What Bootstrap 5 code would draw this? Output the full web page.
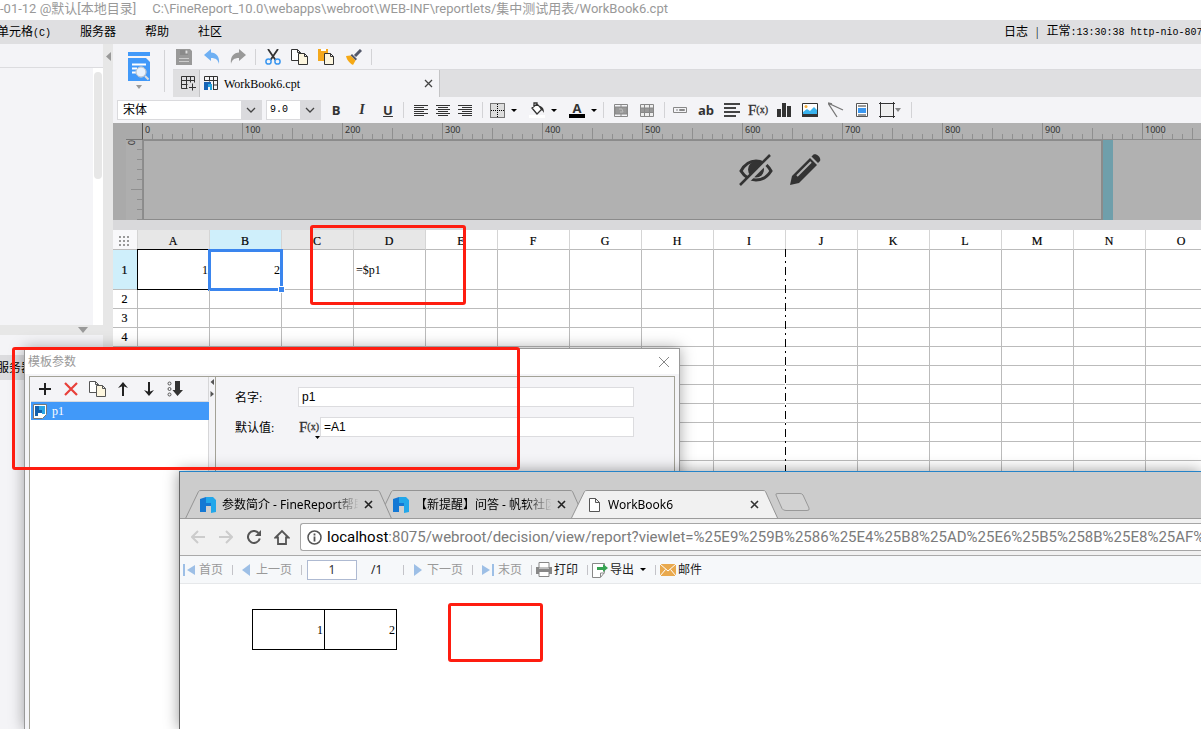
<!DOCTYPE html>
<html lang="zh-CN">
<head>
<meta charset="utf-8">
<meta name="viewport" content="width=device-width, initial-scale=1">
<title>WorkBook6.cpt</title>
<link href="https://cdn.jsdelivr.net/npm/bootstrap@5.3.0/dist/css/bootstrap.min.css" rel="stylesheet">
<style>
:root{--panel:#f4f4f7;--bar:#dfdfe1;--ink:#333;--red:#fe1d10;--ui:"Noto Sans","Noto Sans CJK SC",sans-serif;--path:Roboto,"Noto Sans CJK SC",sans-serif;--song:"Liberation Serif","Noto Sans CJK SC",serif;--mono:"Liberation Mono","Noto Sans CJK SC",monospace}
body{font:12px/16px var(--song);color:#000;background:#fff}
button,input,select{font:inherit;color:inherit}
svg{display:block;flex:none}
.desk{height:100vh}
.title-row{height:20px;font:13px/18px var(--path);color:#999;gap:16px}
.menu-row{height:24px;padding-top:1px;background:var(--bar)}
.menu-row a{color:#000;text-decoration:none}
.menu-links{gap:29px;margin-left:-3px}
.menu-links small{font:10px/16px var(--mono)}
.status-text{width:197px;gap:8px}
.status-text .clock{font:10px/16px var(--mono)}
.status-text .clock b{font-weight:400;font-size:12px}
.side{width:103px;background:var(--panel)}
.side-head{height:24px;border-bottom:1px solid #dcdcdf}
.side-tree{height:257px}
.side-scroll{width:10px;background:#fff;padding:4px 1px}
.side-scroll i{display:block;height:107px;border-radius:4px;background:#e7e7e7}
.side-split{height:10px;background:#e7e7e7;padding-right:15px}
.side-tab{height:25px;margin-top:20px;background:#dcdcdf;border:0;line-height:24px;color:#000;text-indent:-3px}
.gutter{width:10px;background:#e7e7e7;padding-top:8px}
.tbtn{padding:0;border:0;background:none;display:inline-flex;align-items:center;justify-content:center;flex:none;height:24px;color:var(--ink)}
.w22{width:22px}.w26{width:26px}.w27{width:27px}.w30{width:30px}.w40{width:40px;gap:6px}
.vsep{width:1px;height:16px;background:#d3d3d6;flex:none}
.preview-box{width:60px;background:var(--panel);padding-left:9px}
.preview-box .vsep{height:42px}
.preview-box button{width:34px;height:50px;gap:4px;flex-direction:column}
.quick-row{height:25px;background:var(--panel)}
.file-row{height:28px;background:var(--bar);border-top:1px solid #dadadd}
.file-row .sheet{width:27px;height:27px;padding-left:4px;border-right:1px solid #c4c4c6}
.file-tab{width:240px;background:var(--panel);border-right:1px solid #c4c4c6;gap:5px;padding:0 6px 0 4px}
.format-row{height:26px;background:var(--panel);padding-left:4px}
.pick{height:20px;border:1px solid #dadadd;border-radius:0;padding:0 22px 0 5px;appearance:none;line-height:18px;background:#fff url("data:image/svg+xml,%3Csvg xmlns='http://www.w3.org/2000/svg' width='20' height='18'%3E%3Cpath fill='%23dadadd' d='M0 0h20v18H0z'/%3E%3Cpath fill='none' stroke='%23444' stroke-width='1.3' d='M6 7l4 4 4-4'/%3E%3C/svg%3E") right center no-repeat}
.pick-face{width:145px}.pick-size{width:55px;font:10px/18px var(--mono);padding-left:3px}
.glyph{font:bold 13px/16px "Open Sans",sans-serif}
.glyph-serif{font:italic bold 14px/16px var(--song)}
.glyph-fx{font:15px/16px "Liberation Serif",serif;-webkit-text-stroke:.3px #333}
.glyph-fx small{font-size:10px}
.biu{margin:0 2px}
.aligns{margin:0 6px}
.design{display:grid;grid-template-columns:13px 17px 1fr;grid-template-rows:17px 80px;background:#b1b1b1;overflow:hidden;font:9px/13px "Noto Sans",sans-serif;color:#333}
.d-corner{background:#aaa;grid-row:1/3}
.d-corner2{background:#aaa;border-bottom:1px solid #777}
.rule-x{overflow:hidden;margin-left:-1px;border-bottom:1px solid #8d8d8d;border-left:1px solid #555;background:
 repeating-linear-gradient(90deg,transparent 0 99px,#8a8a8a 99px 100px) 0 0/100% 16px no-repeat,
 repeating-linear-gradient(90deg,transparent 0 49px,#8f8f8f 49px 50px) 0 5px/100% 11px no-repeat,
 repeating-linear-gradient(90deg,transparent 0 9px,#8f8f8f 9px 10px) 0 11px/100% 5px no-repeat}
.rule-x span{width:100px;flex:none;padding-left:2px}
.rule-y{border-right:1px solid #8d8d8d;background:
 repeating-linear-gradient(180deg,transparent 0 49px,#8f8f8f 49px 50px) right 0/11px 100% no-repeat,
 repeating-linear-gradient(180deg,transparent 0 9px,#8f8f8f 9px 10px) right 0/5px 100% no-repeat,#aeaeae}
.rule-y span{writing-mode:vertical-rl;line-height:10px;display:block;width:10px}
.paper{width:960px;border:1px solid #8b8b8b;border-width:1px 2px 1px 1px;padding:13px 0 0 595px;gap:16px}
.paper-edge{width:10px;background:#6f9fab}
.grid-gap{height:10px;background:#d9d9db}
.sheet-area{overflow:hidden;flex:1 1 0;min-height:0;background:#fff}
.cells{table-layout:fixed;width:1105px;border-collapse:separate;border-spacing:0;line-height:14px}
.cells th,.cells td{border:solid #bbb;border-width:0 1px 1px 0;padding:0 1px 0 2px;font-weight:400;height:19px;position:relative;color:#000}
.cells th{text-align:center;padding:0 1px 0 0;-webkit-text-stroke:.2px #000}
.cells thead th{height:20px;padding-top:2px;border-right-color:#d5d5d5}
.cells .r1>*{height:40px}
.cells .dim{background:#e7e7e7}.cells .hot{background:#cfeffb}
.cells td.boxed::before{content:"";position:absolute;inset:-1px;border:1px solid #000}
.cells td.picked::after{content:"";position:absolute;inset:-1px -2px -2px -2px;border:3px solid #3a85ee}
.cells .handle{position:absolute;right:-3px;bottom:-3px;width:5px;height:5px;background:#3a85ee;outline:1px solid #fff;z-index:2}
.page-line{position:absolute;left:672px;top:19px;bottom:0;width:1px;z-index:2;background:repeating-linear-gradient(180deg,#000 0 8px,#fff 8px 12px,#000 12px 14px,#fff 14px 18px)}
.mark-box{position:absolute;border:3px solid var(--red);border-radius:3px;pointer-events:none;z-index:30}
.mark-cells{left:310px;top:225px;width:156px;height:80px}
.mark-dialog{left:12px;top:347px;width:508px;height:123px}
.mark-result{left:268px;top:131px;width:95px;height:59px}
.dialog-win{position:absolute;left:24px;top:348px;bottom:0;width:656px;background:#f4f4f7;border:1px solid #999;border-bottom:0;box-shadow:0 0 14px rgba(0,0,0,.35);z-index:10}
.dialog-head{height:25px;background:#fff;padding:0 9px 0 3px;font:12px/16px var(--ui);color:#999;margin-bottom:2px}
.dialog-body{margin:0 4px;border:1px solid #a3a297;border-bottom:0}
.param-side{width:179px;border-right:1px solid #d6d6d8;background:#fff}
.param-tools{height:24px;background:var(--panel);padding-left:2px}
.param-item{height:19px;margin:0 0 0 1px;background:#4199f9;color:#fff;border:0;padding:0 2px;gap:5px;border-top:1px solid #d8dadf}
.param-split{width:7px;background:var(--panel);border-right:1px solid #a3a297}
.param-form{background:var(--panel);padding:10px 40px 0 19px}
.param-form .line{height:20px;margin-bottom:10px}
.param-form label{width:63px;padding-top:1px}
.param-form input{height:20px;border:1px solid #dcdcdf;border-radius:0;padding:0 3px;font:12px/18px "Liberation Sans",sans-serif;min-width:0;flex:1}
.browser-win{position:absolute;left:179px;top:471px;right:0;bottom:0;background:#fff;border-left:1px solid #666;border-top:1px solid #2583c8;box-shadow:0 0 14px rgba(0,0,0,.4);z-index:20;font-family:var(--ui)}
.tab-strip{height:47px;background:#ccc;padding:18px 0 0 5px;border-bottom:1px solid #9b9b9b}
.btab{width:207px;height:29px;position:relative;padding:0 19px 0 15px;gap:6px;flex:none;margin-right:-14px;color:#000;text-decoration:none;margin-bottom:-1px}
.btab .shape{position:absolute;left:0;top:0;z-index:-1}
.btab .txt{flex:1;overflow:hidden;white-space:nowrap;-webkit-mask:linear-gradient(90deg,#000 110px,transparent 137px);mask:linear-gradient(90deg,#000 110px,transparent 137px)}
.btab:nth-child(1){z-index:2}.btab:nth-child(2){z-index:1}.btab:nth-child(3){z-index:3}
.nav-row{height:37px;background:#f1f1f1;border-bottom:1px solid #aaa;padding-left:4px}
.nav-row .tbtn{width:28px}
.url{flex:1;height:28px;border:1px solid #a6a6a6;border-right:0;border-radius:3px 0 0 3px;background:#fff;overflow:hidden;white-space:nowrap;font:15px/26px var(--path);color:#7b7b7b;margin-left:4px;padding-left:6px;gap:5px}
.url b{font-weight:400;color:#000}
.report-row{height:28px;background:#f6f8fa;border-bottom:1px solid #e6e8ea;padding-left:3px;color:#222}
.rbtn{padding:0;border:0;background:none;display:inline-flex;align-items:center;gap:4px;flex:none;line-height:18px}
.rbtn.tight{gap:2px}
.rbtn:disabled{color:#999}
.rsep{width:1px;height:10px;background:#c3c3c8;flex:none;margin:0 9px}
.rsep.near{margin-right:4px}
.page-no{width:50px;height:20px;border:1px solid #aebad2;border-radius:0;padding:0;margin-left:-4px;text-align:center;color:#333}
.page-sum{width:32px;margin-left:14px}
.result{width:145px;margin:25px 0 0 72px;border-collapse:collapse;font:12px/14px var(--song);table-layout:fixed}
.result td{border:1px solid #000;height:40px;padding:0 1px;text-align:right}
</style>
</head>
<body>
<div class="desk d-flex flex-column overflow-hidden position-relative">
  <header>
    <div class="title-row d-flex text-nowrap"><span>-01-12 @默认[本地目录]</span><span>C:\FineReport_10.0\webapps\webroot\WEB-INF\reportlets/集中测试用表/WorkBook6.cpt</span></div>
    <nav class="menu-row d-flex align-items-center text-nowrap">
      <div class="menu-links d-flex flex-grow-1"><a href="#">单元格<small>(C)</small></a><a href="#">服务器</a><a href="#">帮助</a><a href="#">社区</a></div>
      <div class="status-text d-flex overflow-hidden"><a href="#">日志</a><span>|</span><span class="clock"><b>正常</b>:13:30:38 http-nio-8075</span></div>
    </nav>
  </header>

  <div class="d-flex flex-grow-1" style="min-height:0">
    <aside class="side flex-shrink-0 d-flex flex-column">
      <div class="side-head"></div>
      <div class="side-tree d-flex justify-content-end"><div class="side-scroll"><i></i></div></div>
      <div class="side-split d-flex justify-content-end align-items-center"><svg width="10" height="6"><path d="M0 0h10L5 6z" fill="#999"/></svg></div>
      <button class="side-tab text-start p-0 text-nowrap">服务器</button>
    </aside>
    <div class="gutter flex-shrink-0"><svg width="10" height="9"><path d="M8 0v9L3 4.500z" fill="#999"/></svg></div>

    <main class="d-flex flex-column flex-grow-1" style="min-width:0">
      <div class="d-flex">
        <div class="preview-box d-flex align-items-center flex-shrink-0">
          <button class="tbtn" aria-label="预览"><svg width="22" height="29"><path d="M0 0h22v4H0zM0 6h18l4 4v19H0z" fill="#4199f9"/><path d="M4 12.500h14M4 16.500h5M4 20.500h5" stroke="#fff" stroke-width="2"/><circle cx="13" cy="20" r="5" fill="#e8f2fd" stroke="#fff"/><circle cx="13" cy="20" r="5" fill="none" stroke="#7d8fa3" stroke-width=".6"/><path d="M17 24l3.500 3.500" stroke="#ddd" stroke-width="2"/></svg><svg width="6" height="4"><path d="M0 0h6L3 4z" fill="#999"/></svg></button>
          <span class="vsep ms-2"></span>
        </div>
        <div class="flex-grow-1" style="min-width:0">
          <div class="quick-row d-flex align-items-center">
            <button class="tbtn w22" aria-label="保存"><svg width="16" height="16"><path d="M0 0h14l2 2v14H0z" fill="#999"/><path d="M4 1h8v5H4z" fill="#8a8a8a"/><path d="M9.500 1.500h2v3h-2z" fill="#ddd"/><path d="M3 9.500h10M3 12.500h10" stroke="#ccc"/></svg></button>
            <button class="tbtn w30 ps-1" aria-label="撤销"><svg width="16" height="16"><path d="M0 6l7-6v3.500c5 0 9 4 8 11.500-1-4-3-6-8-6V12z" fill="#6fb0f3"/></svg></button>
            <button class="tbtn w26" aria-label="重做"><svg width="16" height="16"><path d="M16 6L9 0v3.500C4 3.500 0 7.500 1 15c1-4 3-6 8-6V12z" fill="#999"/></svg></button>
            <span class="vsep mx-1"></span>
            <button class="tbtn w26" aria-label="剪切"><svg width="16" height="16" fill="none"><path d="M3 0l7.500 11M13 0L5.500 11" stroke="#333" stroke-width="1.800"/><circle cx="3.500" cy="12.500" r="2.600" stroke="#3b97f0" stroke-width="1.500"/><circle cx="12.500" cy="12.500" r="2.600" stroke="#3b97f0" stroke-width="1.500"/></svg></button>
            <button class="tbtn w27" aria-label="复制"><svg width="17" height="16" fill="#fff" stroke="#333"><path d="M.5.500h6l3 3v8h-9zM6.500.500v3h3"/><path d="M7.500 4.500h6l3 3v8h-9zM13.500 4.500v3h3" fill="#fdf6df"/></svg></button>
            <button class="tbtn w27" aria-label="粘贴"><svg width="17" height="16"><path d="M0 0h10v12H0z" fill="#f4a81c"/><path d="M3 0h5v2H3z" fill="#fff"/><path d="M6.500 4.500h6l3 3v8h-9zM12.500 4.500v3h3" fill="#fdf6df" stroke="#333"/></svg></button>
            <button class="tbtn w27" aria-label="格式刷"><svg width="16" height="16"><path d="M15 1L9 7" stroke="#54596a" stroke-width="3"/><path d="M6 5l5 5-1.500 1.500-5-5z" fill="#54596a"/><path d="M0 7l4.500-.5 5 5L7 16C5 15 1 12 0 7z" fill="#f6a915"/></svg></button>
            <span class="vsep ms-1"></span>
          </div>
          <div class="file-row d-flex">
            <button class="tbtn sheet" aria-label="新建"><svg width="15" height="15" fill="none" stroke="#333"><path d="M.5.500h13M.5 4.500h13M.5 8.500h6M.5 12.500h6M.5.500v12M5.500.500v12M9.500.500v6M13.500.500v6M11.500 7.500v7M8 11.500h7"/></svg></button>
            <div class="file-tab d-flex align-items-center"><svg width="15" height="15" fill="none" stroke="#333"><path d="M.5 5V.5h13v13H9M.5 4.500h13M5.500.500v5M9.500.500v13M9.500 9h4"/><path d="M0 6h7v2H4v6H0z" fill="#1763b5" stroke="none"/><path d="M4 8h4v6H6v-3H4z" fill="#28a5e0" stroke="none"/></svg><span class="flex-grow-1">WorkBook6.cpt</span><button class="tbtn" aria-label="关闭"><svg width="9" height="9"><path d="M1 1l7 7M8 1L1 8" stroke="#444" stroke-width="1.300"/></svg></button></div>
          </div>
        </div>
      </div>

      <div class="format-row d-flex align-items-center">
        <select class="pick pick-face" aria-label="字体"><option>宋体</option></select>
        <select class="pick pick-size ms-1" aria-label="字号"><option>9.0</option></select>
        <div class="biu d-flex"><button class="tbtn w26 glyph">B</button><button class="tbtn w26 glyph-serif">I</button><button class="tbtn w26 glyph text-decoration-underline">U</button></div>
        <span class="vsep"></span>
        <div class="aligns d-flex">
        <button class="tbtn w22" aria-label="左对齐"><svg width="14" height="12" stroke="#333"><path d="M0 1.500h14M0 3.500h10M0 5.500h14M0 7.500h10M0 9.500h14M0 11.500h10"/></svg></button>
        <button class="tbtn w22" aria-label="居中"><svg width="14" height="12" stroke="#333"><path d="M0 1.500h14M2 3.500h10M0 5.500h14M2 7.500h10M0 9.500h14M2 11.500h10"/></svg></button>
        <button class="tbtn w22" aria-label="右对齐"><svg width="14" height="12" stroke="#333"><path d="M0 1.500h14M4 3.500h10M0 5.500h14M4 7.500h10M0 9.500h14M4 11.500h10"/></svg></button>
        </div>
        <span class="vsep"></span>
        <button class="tbtn w40" aria-label="边框"><svg width="15" height="15"><path d="M.5.500h14v14H.5zM7.500 1v13M1 7.500h13" fill="#ddd" stroke="#000" stroke-dasharray="1 1"/></svg><svg width="6" height="3"><path d="M0 0h6L3 3z"/></svg></button>
        <button class="tbtn w40" aria-label="填充"><svg width="16" height="16"><path d="M0 13h16v3H0z" fill="#fff"/><path d="M3 6l5-4 5 5-5 5zM5 5V1h3v3" fill="#fff" stroke="#333" stroke-width="1.300"/><path d="M10 4c3 0 5 2 5 7-1-2-2-3-3-3z" fill="#333"/></svg><svg width="6" height="3"><path d="M0 0h6L3 3z"/></svg></button>
        <button class="tbtn w40" aria-label="字体颜色"><span style="border-bottom:4px solid #000;line-height:12px;width:16px" class="glyph">A</span><svg width="6" height="3"><path d="M0 0h6L3 3z"/></svg></button>
        <span class="vsep"></span>
        <button class="tbtn w26 ms-1" aria-label="合并"><svg width="14" height="13" fill="none" stroke="#888"><path d="M.5.500h13v12H.5zM7 .5v12" /><path d="M1 3h12v7H1z" fill="#999"/><path d="M5 5h3l1 3H6" stroke="#bbb"/></svg></button>
        <button class="tbtn w26" aria-label="取消合并"><svg width="14" height="13"><path d="M.5.500h13v12H.5z" fill="#eee" stroke="#888"/><path d="M1 4h12v5H1z" fill="#999"/><path d="M.5 4h13M.5 8.500h13M4.500 0v13M9.500 0v13" stroke="#888"/></svg></button>
        <span class="vsep mx-1"></span>
        <button class="tbtn w22" aria-label="控件"><svg width="14" height="6" fill="none" stroke="#888"><path d="M.5.500h13v5H.5zM3 3h2M6.500 2.500h5v1h-5z"/></svg></button>
        <button class="tbtn w30 glyph">ab</button>
        <button class="tbtn w22" aria-label="段落"><svg width="16" height="14" stroke="#444" stroke-width="2"><path d="M0 1h16M0 5h12M0 9h16M0 13h12"/></svg></button>
        <button class="tbtn w30 glyph-fx">F<small>(x)</small></button>
        <button class="tbtn w22" aria-label="图表"><svg width="14" height="14" fill="#333"><path d="M0 6h4v8H0zM5 0h4v14H5zM10 3h4v11h-4z"/></svg></button>
        <button class="tbtn w30" aria-label="图片"><svg width="16" height="14"><path d="M.5.500h15v13H.5z" fill="#fff" stroke="#333"/><path d="M1 11V9l4-3 3 2 4-4 3 3v4z" fill="#39b3ee"/><circle cx="4" cy="3.500" r="1.500" fill="#f5b041"/><path d="M0 11h16v3H0z" fill="#333"/></svg></button>
        <button class="tbtn w22" aria-label="斜线"><svg width="16" height="16"><path d="M0 1l15 7M0 1l9 14M0 1l4 1" stroke="#777" stroke-width="1.300" fill="none"/></svg></button>
        <button class="tbtn w30" aria-label="子报表"><svg width="12" height="14"><path d="M.5.500h11v13H.5z" fill="#fff" stroke="#555"/><path d="M2 3h8M2 12h8" stroke="#333"/><path d="M2 5h8v5H2z" fill="#3b97f0"/></svg></button>
        <button class="tbtn w26" aria-label="悬浮元素"><svg width="16" height="16"><path d="M2.500 2.500h11v11h-11z" fill="#eee"/><path d="M1.500 0v16M14.500 0v16M0 1.500h16M0 14.500h16" stroke="#333"/></svg><svg width="6" height="4"><path d="M0 0h6L3 4z" fill="#888"/></svg></button>
        <span class="vsep ms-2"></span>
      </div>

      <div class="design flex-shrink-0">
        <div class="d-corner"></div><div class="d-corner2"></div>
        <div class="rule-x d-flex" id="ruleX"></div>
        <div class="rule-y"><span>0</span></div>
        <div class="d-flex">
          <div class="paper d-flex flex-shrink-0">
            <svg width="34" height="32"><path d="M2 17c5-9 11-10 15-10s10 1 15 10c-5 8-11 9-15 9S7 25 2 17z" fill="none" stroke="#333" stroke-width="3"/><circle cx="17" cy="15.500" r="8" fill="#333"/><path d="M3 32L33 2" stroke="#b1b1b1" stroke-width="5"/><path d="M1 31L31 1" stroke="#333" stroke-width="2.500"/></svg>
            <svg width="32" height="32"><path d="M1 31l2-9L21 4l7 7-18 18z" fill="#333"/><path d="M8 22L22 8" stroke="#b1b1b1" stroke-width="2"/><path d="M22.500 2.500l2-2c3-1.500 8 3 6.500 6.500l-2 2z" fill="#333"/></svg>
          </div>
          <div class="paper-edge flex-shrink-0"></div>
        </div>
      </div>
      <div class="grid-gap flex-shrink-0"></div>
      <div class="sheet-area position-relative">
        <table class="cells"><colgroup><col style="width:25px"></colgroup>
          <thead><tr id="cols"><th style="background:#f8f8fa"><svg width="11" height="10" class="mx-auto" fill="#999"><path d="M0 0h2v2H0zM4 0h2v2H4zM8 0h2v2H8zM0 4h2v2H0zM4 4h2v2H4zM8 4h2v2H8zM0 8h2v2H0zM4 8h2v2H4zM8 8h2v2H8z"/></svg></th></tr></thead>
          <tbody id="rows"></tbody>
        </table>
        <div class="page-line"></div>
      </div>
    </main>
  </div>

  <div class="mark-box mark-cells"></div>
  <div class="mark-box mark-dialog"></div>

  <section class="dialog-win d-flex flex-column">
    <div class="dialog-head d-flex align-items-center justify-content-between"><span>模板参数</span><button class="tbtn" aria-label="关闭"><svg width="12" height="12"><path d="M1 1l10 10M11 1L1 11" stroke="#888"/></svg></button></div>
    <div class="dialog-body d-flex flex-grow-1">
      <div class="param-side flex-shrink-0">
        <div class="param-tools d-flex">
          <button class="tbtn w26" aria-label="添加"><svg width="12" height="12"><path d="M6 0v12M0 6h12" stroke="#222" stroke-width="2"/></svg></button>
          <button class="tbtn w26" aria-label="删除"><svg width="14" height="14"><path d="M1 1l12 12M13 1L1 13" stroke="#e8403a" stroke-width="2.200"/></svg></button>
          <button class="tbtn w26" aria-label="复制"><svg width="17" height="16" fill="#fff" stroke="#555"><path d="M.5.500h6l3 3v8h-9zM6.500.500v3h3"/><path d="M7.500 4.500h6l3 3v8h-9zM13.500 4.500v3h3" fill="#fdf6df"/></svg></button>
          <button class="tbtn w26" aria-label="上移"><svg width="10" height="14"><path d="M5 2v12" stroke="#222" stroke-width="2"/><path d="M0 6l5-6 5 6-5-2z" fill="#222"/></svg></button>
          <button class="tbtn w26" aria-label="下移"><svg width="10" height="14"><path d="M5 0v12" stroke="#222" stroke-width="2"/><path d="M0 8l5 6 5-6-5 2z" fill="#222"/></svg></button>
          <button class="tbtn w26" aria-label="排序"><svg width="16" height="16"><g fill="none" stroke="#555"><circle cx="2.500" cy="2.500" r="1.500"/><circle cx="2.500" cy="8" r="1.500"/><circle cx="2.500" cy="13.500" r="1.500"/></g><path d="M8 0h5v9h3l-5.500 6L5.500 9H8z" fill="#333"/></svg></button>
        </div>
        <button class="param-item d-flex align-items-center w-100"><svg width="14" height="15"><path d="M.5.500h13v10l-4 4h-9z" fill="#fff" stroke="#777"/><path d="M2 2h4v4h3v3H5v3H2z" fill="#1560ac"/><path d="M6 2h6v8H9V6H6z" fill="#2ba6e6"/></svg><span>p1</span></button>
      </div>
      <div class="param-split"><svg width="6" height="20"><path d="M5 2v6L1.500 5zM1.500 14v6L5 17z" fill="#555"/></svg></div>
      <form class="param-form flex-grow-1">
        <div class="line d-flex align-items-center"><label for="pname">名字:</label><input id="pname" value="p1"></div>
        <div class="line d-flex align-items-center"><label for="pval">默认值:</label><button type="button" class="tbtn w22 glyph-fx position-relative" aria-label="公式">F<small>(x)</small><svg class="position-absolute end-0 bottom-0" width="5" height="3"><path d="M0 0h5L2.500 3z"/></svg></button><input id="pval" value="=A1"></div>
      </form>
    </div>
  </section>

  <section class="browser-win d-flex flex-column overflow-visible">
    <div class="tab-strip d-flex overflow-hidden flex-shrink-0">
      <a href="#" class="btab d-flex align-items-center"><svg class="shape" width="207" height="29"><path d="M.5 28.500L13.500 1.500Q14 .5 16 .5H192Q194 .5 194.500 1.500L206.500 28.500" fill="#cfcfcf" stroke="#949494"/></svg><svg width="16" height="16"><path d="M0 2L6 0v5h5v4H6v6H0z" fill="#1478d4"/><path d="M6 0h7l3 3v12l-5 1V6H6z" fill="#22a7ea"/></svg><span class="txt">参数简介 - FineReport帮助</span><svg width="9" height="9"><path d="M1 1l7 7M8 1L1 8" stroke="#222" stroke-width="1.600"/></svg></a>
      <a href="#" class="btab d-flex align-items-center"><svg class="shape" width="207" height="29"><path d="M.5 28.500L13.500 1.500Q14 .5 16 .5H192Q194 .5 194.500 1.500L206.500 28.500" fill="#cfcfcf" stroke="#949494"/></svg><svg width="16" height="16"><path d="M0 2L6 0v5h5v4H6v6H0z" fill="#1478d4"/><path d="M6 0h7l3 3v12l-5 1V6H6z" fill="#22a7ea"/></svg><span class="txt">【新提醒】问答 - 帆软社区</span><svg width="9" height="9"><path d="M1 1l7 7M8 1L1 8" stroke="#222" stroke-width="1.600"/></svg></a>
      <a href="#" class="btab d-flex align-items-center"><svg class="shape" width="207" height="29"><path d="M0 29L13.500 1.500Q14 .5 16 .5H192Q194 .5 194.500 1.500L207 29" fill="#f1f1f1" stroke="#949494"/></svg><svg width="16" height="16" fill="#fff" stroke="#555"><path d="M3.500 1.500h6l4 4v9h-10zM9.500 1.500v4h4"/></svg><span class="txt">WorkBook6</span><svg width="9" height="9"><path d="M1 1l7 7M8 1L1 8" stroke="#333" stroke-width="1.600"/></svg></a>
      <button class="tbtn ms-2" style="width:40px" aria-label="新标签页"><svg width="35" height="18"><path d="M1 2Q0 .5 3 .5H25Q27 .5 28 2L34 15Q35 17.500 32 17.500H11Q8 17.500 7 15.500z" fill="#d2d2d2" stroke="#999"/></svg></button>
    </div>
    <div class="nav-row d-flex align-items-center flex-shrink-0">
      <button class="tbtn" aria-label="后退"><svg width="14" height="14" fill="none" stroke="#ccc" stroke-width="2"><path d="M14 7H1M7 1L1 7l6 6"/></svg></button>
      <button class="tbtn" aria-label="前进"><svg width="14" height="14" fill="none" stroke="#ccc" stroke-width="2"><path d="M0 7h13M7 1l6 6-6 6"/></svg></button>
      <button class="tbtn" aria-label="刷新"><svg width="14" height="14"><path d="M11.500 3A6 6 0 1 0 12.800 8.500" fill="none" stroke="#555" stroke-width="2"/><path d="M14 0v6H8z" fill="#555"/></svg></button>
      <button class="tbtn" aria-label="主页"><svg width="16" height="16"><path d="M1.500 8.500L8 2l6.500 6.500h-2.500V15H4V8.500z" fill="none" stroke="#555" stroke-width="1.800"/></svg></button>
      <div class="url d-flex align-items-center"><svg width="15" height="15"><circle cx="7.500" cy="7.500" r="6.500" fill="none" stroke="#555" stroke-width="1.500"/><path d="M7.500 3.500v2M7.500 6.500v5" stroke="#555" stroke-width="1.800"/></svg><span><b>localhost</b>:8075/webroot/decision/view/report?viewlet=%25E9%259B%2586%25E4%25B8%25AD%25E6%25B5%258B%25E8%25AF%25</span></div>
    </div>
    <div class="report-row d-flex align-items-center flex-shrink-0 text-nowrap">
      <button class="rbtn" disabled><svg width="12" height="12" fill="#9dbfe6"><path d="M0 0h2v12H0zM12 1v10L4 6z"/></svg>首页</button><i class="rsep"></i>
      <button class="rbtn" disabled><svg width="10" height="12" fill="#9dbfe6"><path d="M8 0v12L0 6z"/></svg>上一页</button><i class="rsep"></i>
      <input class="page-no" value="1" aria-label="页码"><span class="page-sum">/1</span><i class="rsep ms-0"></i>
      <button class="rbtn" disabled><svg width="10" height="12" fill="#9dbfe6"><path d="M1 0v12l8-6z"/></svg>下一页</button><i class="rsep"></i>
      <button class="rbtn" disabled><svg width="12" height="12" fill="#9dbfe6"><path d="M0 1v10l8-5zM10 0h2v12h-2z"/></svg>末页</button><i class="rsep near"></i>
      <button class="rbtn tight"><svg width="16" height="15"><path d="M3 .5h10V6H3zM3 9h10v5.500H3z" fill="#fff" stroke="#888"/><path d="M0 5h3v2h10V5h3v7h-3v-2H3v2H0z" fill="#888"/></svg>打印</button><i class="rsep near"></i>
      <button class="rbtn tight"><svg width="16" height="16"><path d="M.5 1.500h12v9l-4 5h-8zM8.500 15v-4h4" fill="#fff" stroke="#888"/><path d="M5 5h6V2l5 4-5 4V8H5z" fill="#35a352"/></svg>导出<svg width="6" height="3" class="ms-1"><path d="M0 0h6L3 3z"/></svg></button><i class="rsep near"></i>
      <button class="rbtn tight"><svg width="16" height="12"><path d="M0 0h16v12H0z" fill="#e9a94d"/><path d="M0 0l8 7 8-7M0 12l5.500-6.500M16 12l-5.500-6.500" fill="none" stroke="#fff"/></svg>邮件</button>
    </div>
    <table class="result"><tr><td>1</td><td>2</td></tr></table>
    <div class="mark-box mark-result"></div>
  </section>
</div>
<script src="https://cdn.jsdelivr.net/npm/bootstrap@5.3.0/dist/js/bootstrap.bundle.min.js"></script>
<script>
const names = [...'ABCDEFGHIJKLMNO'];
const ruleX = document.getElementById('ruleX');
for (let n = 0; n <= 1000; n += 100) ruleX.insertAdjacentHTML('beforeend', `<span>${n}</span>`);
document.getElementById('cols').insertAdjacentHTML('beforeend',
  names.map(c => `<th class="${c === 'B' ? 'hot' : 'ACD'.includes(c) ? 'dim' : ''}">${c}</th>`).join(''));
const values = {
  A: '<td class="text-end boxed">1</td>',
  B: '<td class="text-end picked">2<i class="handle"></i></td>',
  D: '<td>=$p1</td>'
};
let html = '';
for (let r = 1; r <= 20; r++) {
  html += `<tr class="${r === 1 ? 'r1' : ''}"><th class="${r === 1 ? 'hot' : ''}">${r}</th>` +
    names.map(c => (r === 1 && values[c]) || '<td></td>').join('') + '</tr>';
}
document.getElementById('rows').innerHTML = html;
</script>
</body>
</html>
